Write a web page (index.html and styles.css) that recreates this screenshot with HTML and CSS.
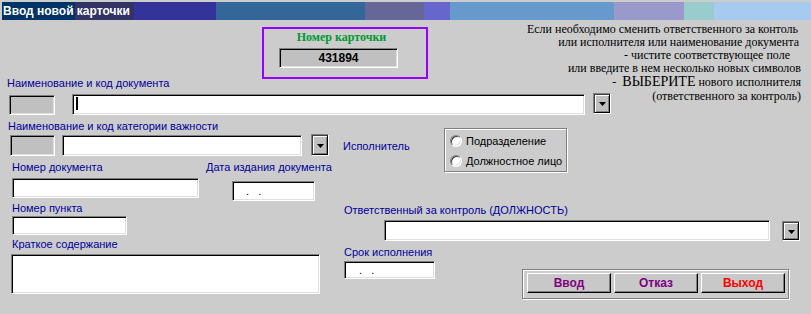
FILE: index.html
```html
<!DOCTYPE html>
<html lang="ru">
<head>
<meta charset="utf-8">
<title>Ввод новой карточки</title>
<link rel="stylesheet" href="styles.css">
</head>
<body>
<div class="titlebar">Ввод новой карточки</div>

<div class="top">
  <div class="cardbox">
    <div class="cardbox-title">Номер карточки</div>
    <div class="sunken grey cardnum">431894</div>
  </div>

  <div class="info">
    <div class="line l1">Если необходимо сменить ответственного за контоль</div>
    <div class="line l2">или исполнителя или наименование документа</div>
    <div class="line l3">- чистите соответствующее поле</div>
    <div class="line l4">или введите в нем несколько новых символов</div>
    <div class="line l5">-  <span class="caps">ВЫБЕРИТЕ</span> нового исполнителя</div>
    <div class="line l6">(ответственного за контроль)</div>
  </div>

  <div class="docblock">
    <div class="lbl doclbl">Наименование и код документа</div>
    <div class="fieldrow">
      <div class="sunken grey doccode"></div>
      <div class="sunken docname"><span class="caret"></span></div>
      <div class="dd docdd"><div class="dd-btn"><svg width="7" height="4" viewBox="0 0 7 4"><polygon points="0,0 7,0 3.5,4" fill="#000"/></svg></div></div>
    </div>
  </div>
</div>

<div class="lower">
  <div class="leftcol">
    <div class="lbl catlbl">Наименование и код категории важности</div>
    <div class="fieldrow catrow">
      <div class="sunken grey catcode"></div>
      <div class="sunken catname"></div>
      <div class="dd catdd"><div class="dd-btn"><svg width="7" height="4" viewBox="0 0 7 4"><polygon points="0,0 7,0 3.5,4" fill="#000"/></svg></div></div>
    </div>

    <div class="numrow">
      <div class="numcol">
        <div class="lbl">Номер документа</div>
        <div class="sunken docnum"></div>
      </div>
      <div class="datecol">
        <div class="lbl">Дата издания документа</div>
        <div class="sunken date1"><span class="dots">.   .</span></div>
      </div>
    </div>

    <div class="lbl punktlbl">Номер пункта</div>
    <div class="sunken punkt"></div>

    <div class="lbl kratlbl">Краткое содержание</div>
    <div class="sunken summary"></div>
  </div>

  <div class="rightcol">
    <div class="isprow">
      <div class="lbl isplbl">Исполнитель</div>
      <div class="radiobox">
        <div class="radio"><span class="circle"></span><span class="rtext">Подразделение</span></div>
        <div class="radio"><span class="circle"></span><span class="rtext">Должностное лицо</span></div>
      </div>
    </div>

    <div class="lbl otvlbl">Ответственный за контроль (ДОЛЖНОСТЬ)</div>
    <div class="fieldrow otvrow">
      <div class="sunken otvname"></div>
      <div class="dd otvdd"><div class="dd-btn"><svg width="7" height="4" viewBox="0 0 7 4"><polygon points="0,0 7,0 3.5,4" fill="#000"/></svg></div></div>
    </div>

    <div class="lbl sroklbl">Срок исполнения</div>
    <div class="bottomrow">
      <div class="sunken date2"><span class="dots">.   .</span></div>
      <div class="btnpanel">
        <div class="btn btn-purple">Ввод</div>
        <div class="btn btn-purple">Отказ</div>
        <div class="btn btn-red">Выход</div>
      </div>
    </div>
  </div>
</div>
</body>
</html>
```

FILE: styles.css
```css
* { box-sizing: border-box; }

body {
  margin: 0;
  width: 811px;
  height: 314px;
  overflow: hidden;
  background: #cccccc;
  font-family: "Liberation Sans", Arial, sans-serif;
  font-size: 11px;
  color: #000;
}

.titlebar {
  margin: 2px 0 0 2px;
  height: 18px;
  line-height: 18px;
  padding-left: 1px;
  color: #fff;
  font-weight: bold;
  font-size: 12px;
  white-space: nowrap;
  background: linear-gradient(to right,
    #003366 0 73px,
    #333366 73px 132px,
    #333399 132px 214px,
    #336699 214px 363px,
    #666699 363px 422px,
    #6666cc 422px 448px,
    #6699cc 448px 612px,
    #9999cc 612px 682px,
    #99cccc 682px 712px,
    #a6caf0 712px);
}

/* generic controls */
.sunken {
  border: 1px solid;
  border-color: #808080 #fff #fff #808080;
  box-shadow: inset 1px 1px #000, inset -1px -1px #dfdfdf;
  background: #fff;
}
.sunken.grey { background: #c0c0c0; }

.dd {
  width: 18px;
  height: 21px;
  border: 1px solid;
  border-color: #808080 #fff #fff #808080;
}
.dd-btn {
  height: 100%;
  display: flex;
  align-items: center;
  justify-content: center;
  padding-top: 1px;
  background: #c0c0c0;
  border: 1px solid;
  border-color: #404040 #000 #000 #404040;
  box-shadow: inset 1px 1px #fff, inset -1px -1px #808080;
}
.dd-btn svg { display: block; }

.lbl {
  color: #000099;
  line-height: 13px;
  white-space: nowrap;
}

.fieldrow {
  display: flex;
  align-items: flex-start;
}

/* top area */
.top {
  display: grid;
  grid-template-columns: 620px 1fr;
  grid-template-rows: auto auto;
}

.cardbox {
  grid-column: 1;
  grid-row: 1;
  justify-self: start;
  margin: 7px 0 0 262px;
  width: 166px;
  height: 52px;
  border: 2px solid #9900ff;
  padding: 1px 0 0 15px;
}
.cardbox-title {
  width: 119px;
  padding-left: 6px;
  text-align: center;
  font-family: "Liberation Serif", "Times New Roman", serif;
  font-weight: bold;
  font-size: 12px;
  line-height: 14px;
  color: #009933;
  white-space: nowrap;
}
.cardnum {
  margin-top: 4px;
  width: 119px;
  height: 20px;
  line-height: 18px;
  text-align: center;
  font-weight: bold;
  font-size: 12px;
}

.info {
  grid-column: 1 / 3;
  grid-row: 1 / 3;
  align-self: start;
  justify-self: end;
  margin-top: 3px;
  padding-right: 10px;
  text-align: right;
  font-family: "Liberation Serif", "Times New Roman", serif;
  font-size: 12px;
  line-height: 13px;
  white-space: nowrap;
}
.info .line { white-space: pre; }
.info .l1 { padding-right: 3px; }
.info .l2 { padding-right: 2px; }
.info .l3 { padding-right: 11px; }
.info .l5 { line-height: 14px; }
.info .l6 { line-height: 14px; }
.caps { font-size: 14px; line-height: 13px; }

.docblock {
  grid-column: 1;
  grid-row: 2;
  margin-top: -2px;
}
.doclbl { margin-left: 7px; }
.docblock .fieldrow { margin-top: 3px; }
.doccode { margin: 2px 0 0 9px; width: 46px; height: 20px; }
.docname { margin: 1px 0 0 17px; width: 513px; height: 21px; }
.docdd { margin-left: 8px; }
.caret {
  display: block;
  width: 2px;
  height: 13px;
  margin: 2px 0 0 3px;
  background: #000;
}

/* lower area */
.lower {
  display: grid;
  grid-template-columns: 340px 1fr;
}

.catlbl { margin: 5px 0 0 8px; }
.catrow { margin-top: 2px; }
.catcode { margin-left: 10px; width: 45px; height: 21px; }
.catname { margin-left: 7px; width: 240px; height: 21px; }
.catdd { margin: -1px 0 0 9px; height: 22px; }

.numrow {
  display: flex;
  align-items: flex-start;
  margin-top: 5px;
}
.numcol { margin-left: 12px; }
.docnum { margin-top: 4px; width: 187px; height: 20px; }
.datecol { margin-left: 7px; }
.date1 {
  margin: 7px 0 0 26px;
  width: 83px;
  height: 20px;
  line-height: 18px;
  padding-left: 13px;
}
.dots { white-space: pre; }

.punktlbl { margin: 1px 0 0 12px; }
.punkt { margin: 1px 0 0 12px; width: 115px; height: 19px; }

.kratlbl { margin: 3px 0 0 12px; }
.summary { margin: 3px 0 0 11px; width: 309px; height: 40px; }

/* right column */
.isprow {
  display: flex;
  align-items: flex-start;
  margin-top: 13px;
}
.isplbl { margin: 12px 0 0 3px; width: 101px; }
.radiobox {
  width: 123px;
  height: 44px;
  border: 1px solid #808080;
  box-shadow: inset 1px 1px #fff, 1px 1px #fff;
  padding: 2px 0 0 5px;
}
.radio {
  display: flex;
  align-items: center;
  height: 20px;
}
.circle {
  width: 12px;
  height: 12px;
  border-radius: 50%;
  border: 1px solid;
  border-color: #808080 #fff #fff #808080;
  box-shadow: inset 1px 1px #404040, inset -1px -1px #dfdfdf;
  background: #fff;
  margin-right: 4px;
  flex: none;
}
.rtext { white-space: nowrap; }

.otvlbl { margin: 32px 0 0 4px; }
.otvrow { margin-top: 3px; }
.otvname { margin-left: 44px; width: 386px; height: 21px; }
.otvdd { margin: 1px 0 0 12px; height: 20px; }

.sroklbl { margin: 5px 0 0 4px; }
.bottomrow {
  display: flex;
  align-items: flex-start;
  margin-top: 2px;
}
.date2 {
  margin-left: 4px;
  width: 91px;
  height: 18px;
  line-height: 16px;
  padding-left: 14px;
}
.btnpanel {
  display: flex;
  gap: 3px;
  margin: 8px 0 0 87px;
  width: 267px;
  height: 30px;
  padding: 3px 0 0 4px;
  border: 1px solid #808080;
  box-shadow: inset 1px 1px #fff, 1px 1px #fff;
}
.btn {
  width: 84px;
  height: 20px;
  line-height: 18px;
  text-align: center;
  font-weight: bold;
  font-size: 12px;
  background: #c8c8c8;
  border: 1px solid;
  border-color: #fff #000 #000 #fff;
  box-shadow: inset -1px -1px #808080;
}
.btn-purple { color: #800080; }
.btn-red { color: #ff0000; }
```
